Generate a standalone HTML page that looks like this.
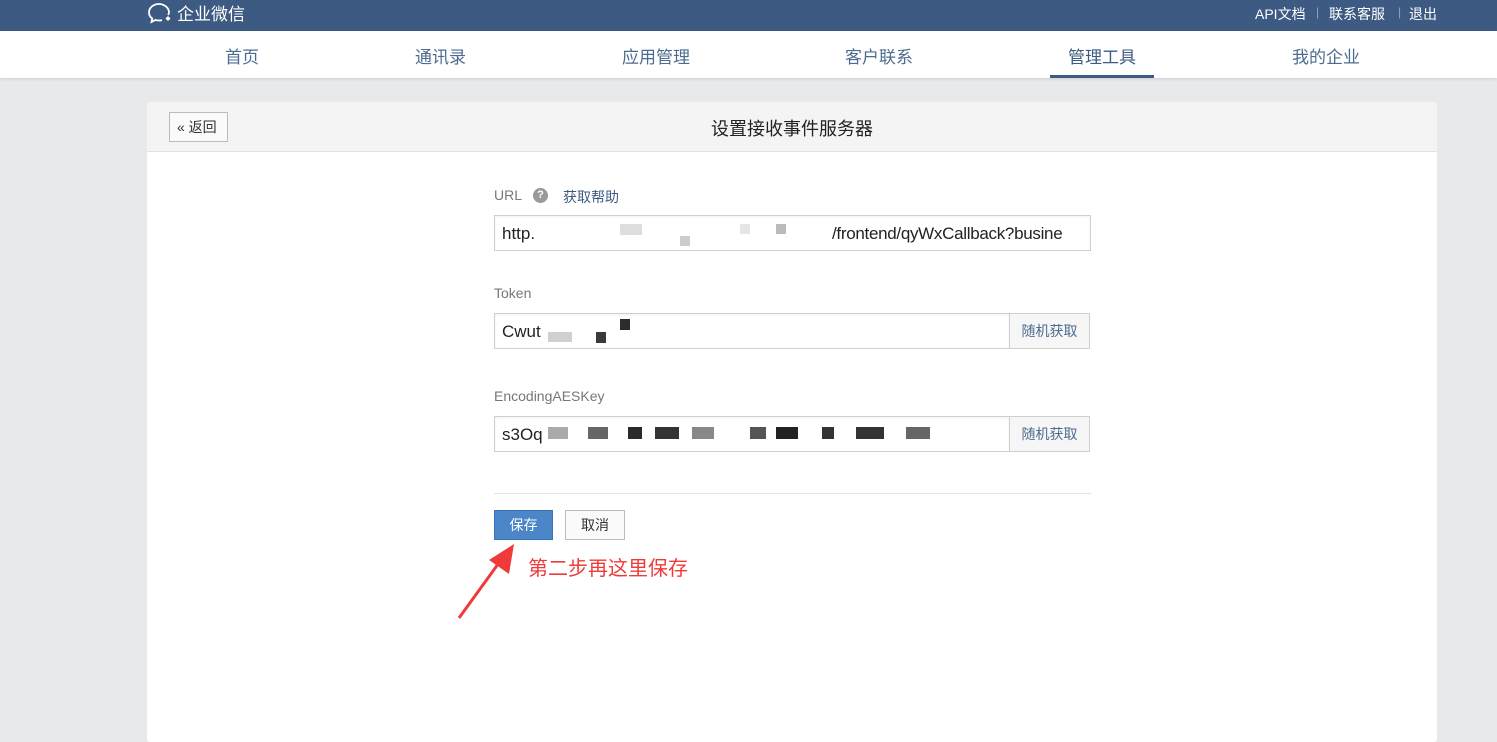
<!DOCTYPE html>
<html><head><meta charset="utf-8"><style>
*{margin:0;padding:0;box-sizing:border-box}
body{width:1497px;height:740px;overflow:hidden;background:#e8e9eb;font-family:"Liberation Sans","Noto Sans CJK SC",sans-serif;position:relative}
.top{position:absolute;left:0;top:0;width:1497px;height:31px;background:#3c5a82;color:#fff}
.nav{position:absolute;left:0;top:31px;width:1497px;height:47px;background:#fff;box-shadow:0 1px 3px rgba(0,0,0,.12)}
.nav span{position:absolute;top:13px;font-size:17px;color:#4d6b8f}
.panel{position:absolute;left:147px;top:102px;width:1290px;height:640px;background:#fff;border-radius:3px}
.ph{height:50px;background:#f4f4f4;border-bottom:1px solid #e2e2e2;position:relative;border-radius:3px 3px 0 0}
.a{position:absolute}
.lbl{font-size:14px;color:#777}
.inp{position:absolute;height:36px;border:1px solid #cfcfcf;background:#fff;font-size:17px;color:#222;padding:8px 7px;box-shadow:inset 0 1px 2px rgba(0,0,0,.06)}
.rb{position:absolute;width:81px;height:36px;border:1px solid #cfcfcf;background:#f6f6f6;color:#4d6b8f;font-size:14px;text-align:center;line-height:34px}
.px{position:absolute}
</style></head><body>
<div class="top">
<svg class="a" style="left:147px;top:2px" width="28" height="24" viewBox="0 0 28 24"><path d="M12 2C6 2 2 6 2 10.5c0 2.5 1.3 4.6 3.3 6L4.5 20l4-2c1.1.3 2.2.5 3.5.5 1 0 2-.1 3-.4" fill="none" stroke="#fff" stroke-width="1.8"/><path d="M21 13c.6-.8 1-1.7 1-2.5C22 6 17.5 2 12 2" fill="none" stroke="#fff" stroke-width="1.8"/><path d="M21 14l2.5 2.5L21 19l-2.5-2.5z" fill="#fff"/></svg>
<span class="a" style="left:177px;top:0px;font-size:17px">企业微信</span>
<span class="a" style="left:1255px;top:4px;font-size:14px">API文档</span>
<span class="a" style="left:1316px;top:5px;font-size:12px;color:#8fa3bd">|</span>
<span class="a" style="left:1329px;top:4px;font-size:14px">联系客服</span>
<span class="a" style="left:1398px;top:5px;font-size:12px;color:#8fa3bd">|</span>
<span class="a" style="left:1409px;top:4px;font-size:14px">退出</span>
</div>
<div class="nav">
<span style="left:225px;top:12px">首页</span><span style="left:415px;top:12px">通讯录</span><span style="left:622px;top:12px">应用管理</span><span style="left:845px;top:12px">客户联系</span><span style="left:1068px;top:12px;color:#3c5a82">管理工具</span><span style="left:1292px;top:12px">我的企业</span>
<div class="a" style="left:1050px;top:44px;width:104px;height:3px;background:#3c5a82"></div>
</div>
<div class="panel">
<div class="ph">
<div class="a" style="left:22px;top:10px;width:59px;height:30px;border:1px solid #bbb;background:#fafafa;font-size:14px;color:#333;line-height:28px;padding-left:7px">« 返回</div>
<div class="a" style="left:0;width:1290px;top:13px;text-align:center;font-size:18px;color:#222">设置接收事件服务器</div>
</div>
</div>
<div class="a lbl" style="left:494px;top:187px">URL</div>
<div class="a" style="left:533px;top:188px;width:15px;height:15px;border-radius:50%;background:#999;color:#fff;font-size:11px;text-align:center;line-height:15px;font-weight:bold">?</div>
<div class="a" style="left:563px;top:187px;font-size:14px;color:#3c5a82">获取帮助</div>
<div class="inp" style="left:494px;top:215px;width:597px">http.<span style="position:absolute;left:337px;top:8px;letter-spacing:-0.3px">/frontend/qyWxCallback?busine</span></div>
<div class="px" style="left:620px;top:224px;width:22px;height:11px;background:#ddd"></div>
<div class="px" style="left:680px;top:236px;width:10px;height:10px;background:#ccc"></div>
<div class="px" style="left:740px;top:224px;width:10px;height:10px;background:#e5e5e5"></div>
<div class="px" style="left:776px;top:224px;width:10px;height:10px;background:#bbb"></div>
<div class="a lbl" style="left:494px;top:285px">Token</div>
<div class="inp" style="left:494px;top:313px;width:516px">Cwut</div>
<div class="rb" style="left:1009px;top:313px">随机获取</div>
<div class="px" style="left:548px;top:332px;width:24px;height:10px;background:#d0d0d0"></div>
<div class="px" style="left:596px;top:332px;width:10px;height:11px;background:#3a3a3a"></div>
<div class="px" style="left:620px;top:319px;width:10px;height:11px;background:#2c2c2c"></div>
<div class="a lbl" style="left:494px;top:388px">EncodingAESKey</div>
<div class="inp" style="left:494px;top:416px;width:516px">s3Oq</div>
<div class="rb" style="left:1009px;top:416px">随机获取</div>
<div class="px" style="left:548px;top:427px;width:20px;height:12px;background:#aaa"></div>
<div class="px" style="left:588px;top:427px;width:20px;height:12px;background:#666"></div>
<div class="px" style="left:628px;top:427px;width:14px;height:12px;background:#2a2a2a"></div>
<div class="px" style="left:655px;top:427px;width:24px;height:12px;background:#333"></div>
<div class="px" style="left:692px;top:427px;width:22px;height:12px;background:#888"></div>
<div class="px" style="left:750px;top:427px;width:16px;height:12px;background:#555"></div>
<div class="px" style="left:776px;top:427px;width:22px;height:12px;background:#222"></div>
<div class="px" style="left:822px;top:427px;width:12px;height:12px;background:#333"></div>
<div class="px" style="left:856px;top:427px;width:28px;height:12px;background:#333"></div>
<div class="px" style="left:906px;top:427px;width:24px;height:12px;background:#666"></div>
<div class="a" style="left:494px;top:493px;width:597px;height:1px;background:#e2e2e2"></div>
<div class="a" style="left:494px;top:510px;width:59px;height:30px;background:#4a86c8;border:1px solid #3a73b3;color:#fff;font-size:14px;text-align:center;line-height:28px">保存</div>
<div class="a" style="left:565px;top:510px;width:60px;height:30px;background:#fafafa;border:1px solid #bbb;color:#333;font-size:14px;text-align:center;line-height:28px">取消</div>
<svg class="a" style="left:455px;top:540px" width="65" height="82"><path d="M4 78L46 20" stroke="#f03a3a" stroke-width="3"/><path d="M59 4L34 20L54 34z" fill="#f03a3a"/></svg>
<div class="a" style="left:528px;top:552px;font-size:20px;color:#f03a3a">第二步再这里保存</div>
</body></html>
